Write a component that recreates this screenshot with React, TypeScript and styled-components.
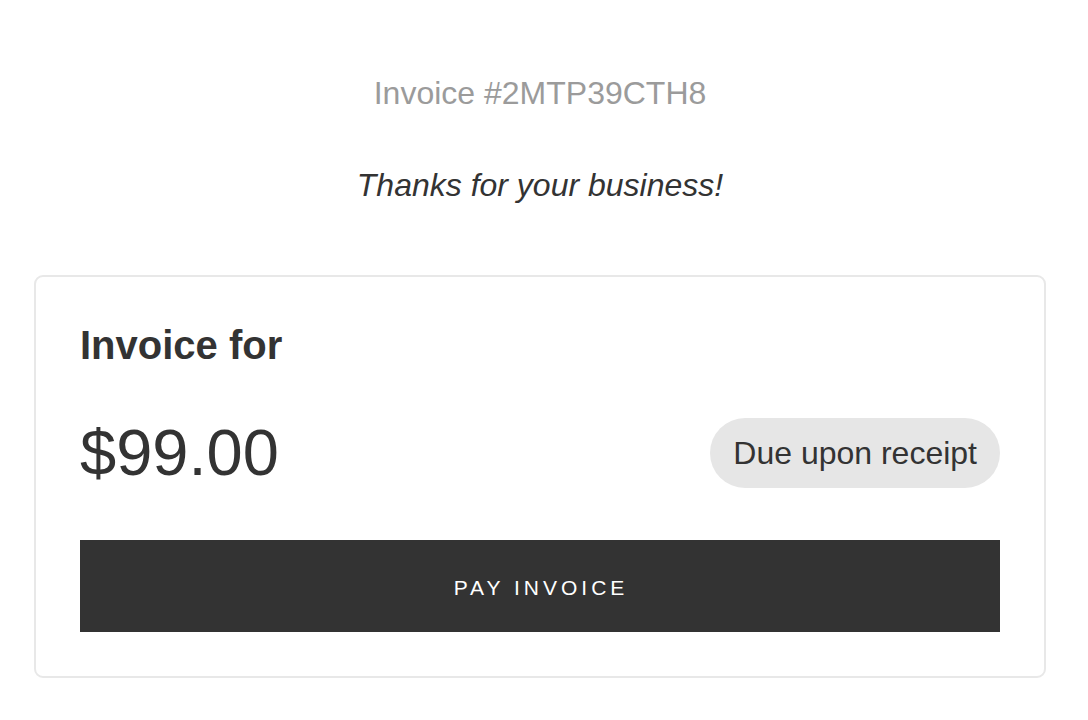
import styled, { createGlobalStyle } from "styled-components";

const GlobalStyle = createGlobalStyle`
  body {
    margin: 0;
    background: #ffffff;
    font-family: "Liberation Sans", Arial, Helvetica, sans-serif;
    color: #333333;
  }
`;

export default function App() {
  return (
    <>
      <GlobalStyle />
      <Page>
        <InvoiceNumber>Invoice #2MTP39CTH8</InvoiceNumber>
        <Thanks>Thanks for your business!</Thanks>
        <Card>
          <Title>Invoice for</Title>
          <AmountRow>
            <Amount>$99.00</Amount>
            <DuePill>Due upon receipt</DuePill>
          </AmountRow>
          <PayButton type="button">Pay invoice</PayButton>
        </Card>
      </Page>
    </>
  );
}

const Page = styled.div`
  display: flex;
  flex-direction: column;
  width: 1012px;
  margin-left: 34px;
  padding-top: 73px;
`;

const InvoiceNumber = styled.div`
  font-size: 32px;
  line-height: 40px;
  color: #9b9b9b;
  text-align: center;
`;

const Thanks = styled.div`
  margin-top: 52px;
  font-size: 32px;
  line-height: 40px;
  font-style: italic;
  color: #333333;
  text-align: center;
`;

const Card = styled.div`
  margin-top: 70px;
  border: 2px solid #e8e8e8;
  border-radius: 9px;
  padding: 44px;
  display: flex;
  flex-direction: column;
`;

const Title = styled.h2`
  margin: 0;
  font-size: 40px;
  line-height: 48px;
  font-weight: 700;
  color: #333333;
`;

const AmountRow = styled.div`
  display: flex;
  align-items: center;
  justify-content: space-between;
  margin-top: 47px;
`;

const Amount = styled.div`
  font-size: 65px;
  line-height: 74px;
  color: #333333;
`;

const DuePill = styled.div`
  display: flex;
  align-items: center;
  height: 70px;
  padding: 0 23px;
  border-radius: 35px;
  background: #e6e6e6;
  font-size: 32px;
  color: #333333;
`;

const PayButton = styled.button`
  margin-top: 50px;
  height: 92px;
  border: none;
  border-radius: 0;
  background: #333333;
  color: #ffffff;
  font-family: "Liberation Sans", Arial, Helvetica, sans-serif;
  font-size: 21px;
  letter-spacing: 4px;
  text-transform: uppercase;
  padding: 4px 0 0 2px;
  cursor: pointer;
`;
